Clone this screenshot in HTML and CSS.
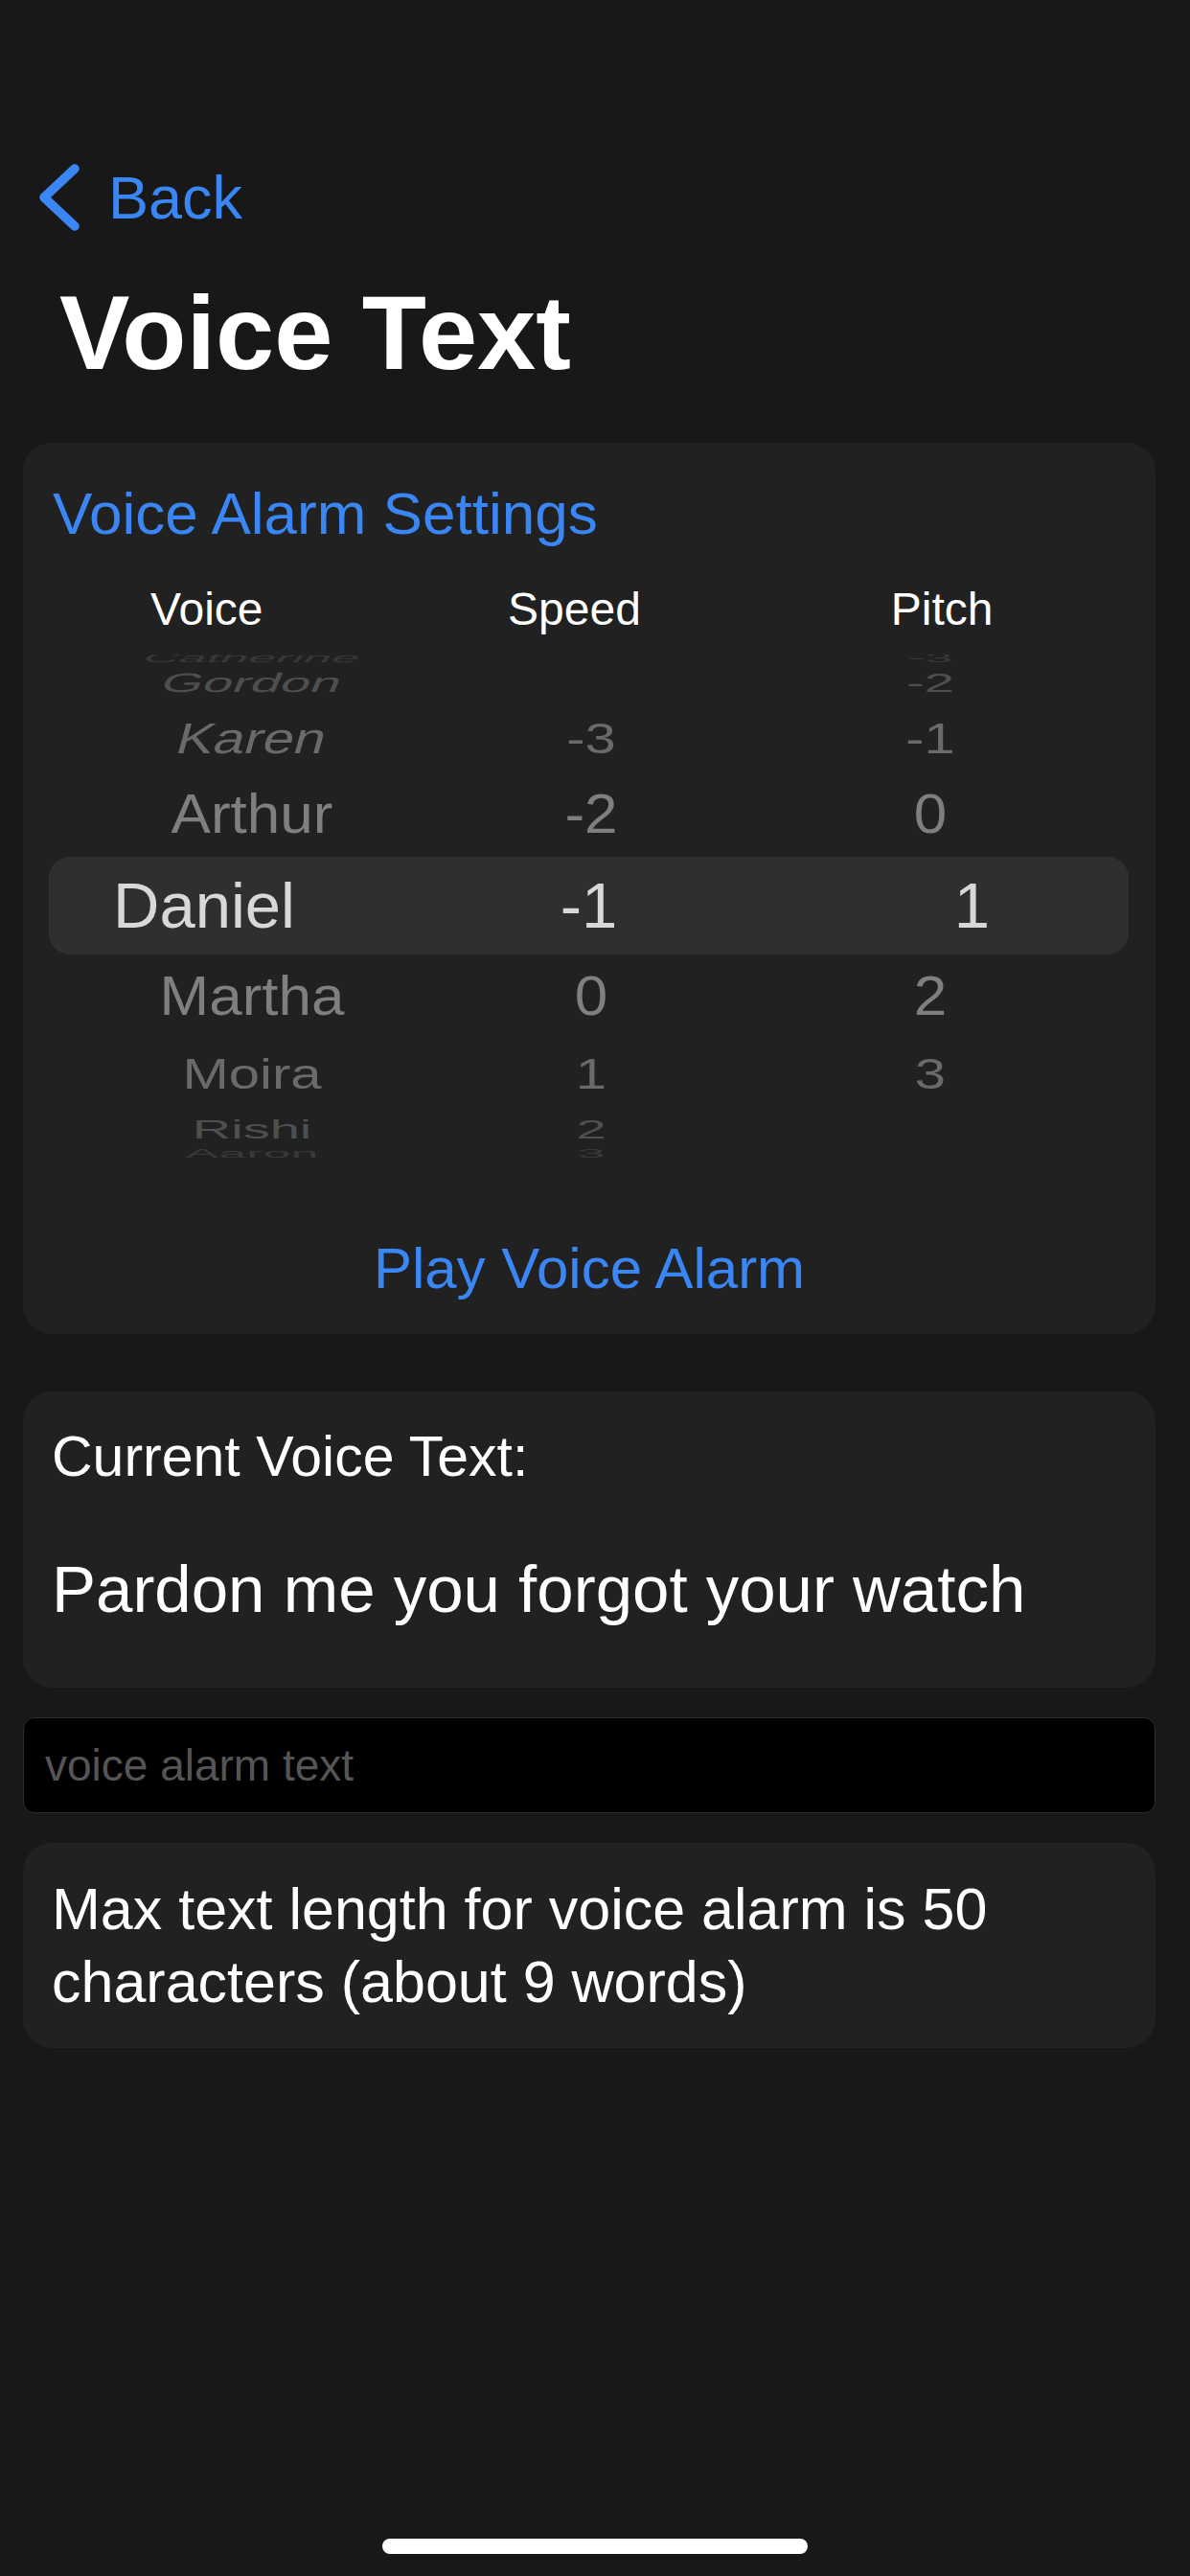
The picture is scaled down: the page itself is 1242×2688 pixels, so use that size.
FILE: index.html
```html
<!DOCTYPE html>
<html lang="en">
<head>
<meta charset="utf-8">
<title>Voice Text</title>
<link rel="stylesheet" href="styles.css">
</head>
<body>
<div class="screen">
  <div class="nav">
    <svg class="chev" width="52" height="80" viewBox="0 0 52 80" aria-hidden="true">
      <polyline points="42,10 10,40 42,70" fill="none" stroke="#3b86f5" stroke-width="9.5" stroke-linecap="round" stroke-linejoin="round"/>
    </svg>
    <span class="back-label">Back</span>
  </div>
  <h1 class="title">Voice Text</h1>

  <div class="cards">
    <section class="card card-settings">
      <div class="card-title">Voice Alarm Settings</div>
      <div class="picker-head">
        <span>Voice</span><span>Speed</span><span>Pitch</span>
      </div>
      <div class="picker">
        <div class="picker-list">
          <div class="prow d4 up"><span class="v">Catherine</span><span></span><span>-3</span></div>
          <div class="prow d3 up"><span class="v">Gordon</span><span></span><span>-2</span></div>
          <div class="prow d2 up"><span class="v">Karen</span><span>-3</span><span>-1</span></div>
          <div class="prow d1"><span class="v">Arthur</span><span>-2</span><span>0</span></div>
          <div class="prow sel"><span class="s1">Daniel</span><span class="s2">-1</span><span class="s3">1</span></div>
          <div class="prow d1"><span class="v">Martha</span><span>0</span><span>2</span></div>
          <div class="prow d2"><span class="v">Moira</span><span>1</span><span>3</span></div>
          <div class="prow d3"><span class="v">Rishi</span><span>2</span><span></span></div>
          <div class="prow d4 down"><span class="v">Aaron</span><span>3</span><span></span></div>
        </div>
      </div>
      <div class="play">Play Voice Alarm</div>
    </section>

    <section class="card card-current">
      <div class="current-label">Current Voice Text:</div>
      <div class="current-text">Pardon me you forgot your watch</div>
    </section>

    <input class="voice-input" type="text" placeholder="voice alarm text">

    <section class="card card-note">
      <p class="note">Max text length for voice alarm is 50 characters (about 9 words)</p>
    </section>
  </div>
</div>
<div class="home-indicator"></div>
</body>
</html>
```

FILE: styles.css
```css
html, body {
  margin: 0;
  padding: 0;
  background: #181818;
}

body {
  font-family: "Liberation Sans", Arial, sans-serif;
  color: #ffffff;
  min-height: 2688px;
}

.screen {
  padding-top: 166px;
}

.nav {
  display: flex;
  align-items: center;
  height: 80px;
  padding-left: 36px;
  gap: 25px;
}

.chev {
  display: block;
  flex: none;
}

.back-label {
  font-size: 63px;
  line-height: 80px;
  color: #3b86f5;
}

.title {
  margin: 36px 0 0;
  padding-left: 62px;
  font-size: 110px;
  line-height: 130px;
  font-weight: 700;
  color: #ffffff;
}

.cards {
  display: flex;
  flex-direction: column;
  padding: 0 36px 0 24px;
  margin-top: 50px;
}

.card {
  background: #212121;
  border-radius: 30px;
}

.card-settings {
  padding: 37px 0 31px;
}

.card-title {
  padding: 0 31px;
  font-size: 62px;
  line-height: 74px;
  color: #3b86f5;
}

.picker-head {
  display: grid;
  grid-template-columns: repeat(3, 1fr);
  margin-top: 33px;
  padding-right: 31px;
  font-size: 48px;
  line-height: 60px;
  text-align: center;
  color: #ffffff;
}

.picker {
  margin: 17px 28px 0 27px;
  height: 526px;
  overflow: hidden;
}

.picker-list {
  margin-top: -19px;
}

.prow {
  display: grid;
  grid-template-columns: repeat(3, 1fr);
  align-items: center;
  padding: 0 30px 0 35px;
  text-align: center;
  white-space: nowrap;
}

.prow span {
  display: block;
}

.d1 {
  height: 88px;
  line-height: 88px;
  font-size: 62px;
  color: #7f7f7f;
  transform: scaleY(0.92);
}

.d2 {
  height: 72px;
  line-height: 72px;
  font-size: 58px;
  color: #6a6a6a;
  transform: scaleY(0.78);
}

.d3 {
  height: 44px;
  line-height: 44px;
  font-size: 56px;
  color: #4f4f4f;
  transform: scaleY(0.5);
}

.d4 {
  height: 26px;
  line-height: 26px;
  font-size: 52px;
  color: #383838;
  transform: scaleY(0.26);
}

.d4.up {
  transform-origin: 50% 100%;
}

.d4.down {
  transform-origin: 50% 0;
}

.up .v {
  transform: skewX(-12deg);
}

.sel {
  height: 102px;
  padding: 0;
  border-radius: 22px;
  background: #2f2f31;
  font-size: 67px;
  line-height: 102px;
  color: #d8d8d8;
}

.sel .s1 {
  text-align: left;
  padding-left: 67px;
}

.sel .s2 {
  text-align: center;
}

.sel .s3 {
  text-align: right;
  padding-right: 145px;
}

.play {
  margin-top: 78px;
  font-size: 60px;
  line-height: 74px;
  text-align: center;
  color: #3b86f5;
}

.card-current {
  margin-top: 60px;
  padding: 33px 30px 62px;
}

.current-label {
  font-size: 59px;
  line-height: 70px;
  color: #ffffff;
}

.current-text {
  margin-top: 64px;
  font-size: 69px;
  line-height: 80px;
  color: #ffffff;
}

.voice-input {
  display: block;
  box-sizing: border-box;
  width: 100%;
  height: 100px;
  margin: 31px 0 0;
  padding: 0 22px;
  background: #000000;
  border: 1px solid #2e2e2e;
  border-radius: 12px;
  font-family: "Liberation Sans", Arial, sans-serif;
  font-size: 46px;
  color: #ffffff;
  outline: none;
}

.voice-input::placeholder {
  color: #555555;
}

.card-note {
  margin-top: 31px;
  padding: 31px 30px;
}

.note {
  margin: 0;
  font-size: 61px;
  line-height: 76px;
  color: #ffffff;
}

.home-indicator {
  position: fixed;
  left: 50%;
  bottom: 23px;
  width: 444px;
  height: 16px;
  margin-left: -222px;
  border-radius: 8px;
  background: #ffffff;
}
```
